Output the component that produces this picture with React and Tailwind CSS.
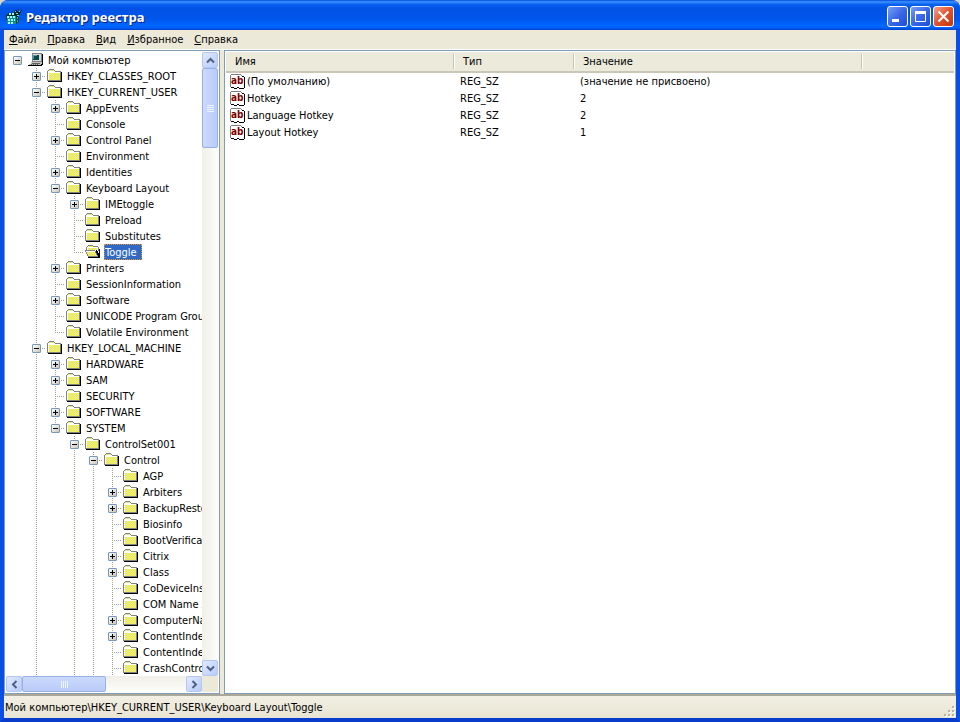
import { useState } from 'react';
import { clsx } from 'clsx';

const MENU = ['Файл', 'Правка', 'Вид', 'Избранное', 'Справка'];

// closed: has subkeys that are not loaded yet, more: has siblings that are not loaded yet
const TREE = {
  name: 'Мой компьютер',
  icon: 'computer',
  children: [
    { name: 'HKEY_CLASSES_ROOT', closed: true },
    {
      name: 'HKEY_CURRENT_USER',
      children: [
        { name: 'AppEvents', closed: true },
        { name: 'Console' },
        { name: 'Control Panel', closed: true },
        { name: 'Environment' },
        { name: 'Identities', closed: true },
        {
          name: 'Keyboard Layout',
          children: [
            { name: 'IMEtoggle', closed: true },
            { name: 'Preload' },
            { name: 'Substitutes' },
            { name: 'Toggle' },
          ],
        },
        { name: 'Printers', closed: true },
        { name: 'SessionInformation' },
        { name: 'Software', closed: true },
        { name: 'UNICODE Program Groups' },
        { name: 'Volatile Environment' },
      ],
    },
    {
      name: 'HKEY_LOCAL_MACHINE',
      more: true,
      children: [
        { name: 'HARDWARE', closed: true },
        { name: 'SAM', closed: true },
        { name: 'SECURITY' },
        { name: 'SOFTWARE', closed: true },
        {
          name: 'SYSTEM',
          children: [
            {
              name: 'ControlSet001',
              more: true,
              children: [
                {
                  name: 'Control',
                  more: true,
                  children: [
                    { name: 'AGP' },
                    { name: 'Arbiters', closed: true },
                    { name: 'BackupRestore', closed: true },
                    { name: 'Biosinfo' },
                    { name: 'BootVerificationProgram' },
                    { name: 'Citrix', closed: true },
                    { name: 'Class', closed: true },
                    { name: 'CoDeviceInstallers' },
                    { name: 'COM Name Arbiter' },
                    { name: 'ComputerName', closed: true },
                    { name: 'ContentIndex', closed: true },
                    { name: 'ContentIndexCommon' },
                    { name: 'CrashControl', more: true },
                  ],
                },
              ],
            },
          ],
        },
      ],
    },
  ],
};

const VALUES = [
  { name: '(По умолчанию)', type: 'REG_SZ', value: '(значение не присвоено)' },
  { name: 'Hotkey', type: 'REG_SZ', value: '2' },
  { name: 'Language Hotkey', type: 'REG_SZ', value: '2' },
  { name: 'Layout Hotkey', type: 'REG_SZ', value: '1' },
];

// flatten the tree; guides[i] says whether the ancestor at level i has siblings below
function flatten(node, closed, depth = 0, guides = [], last = true, path = '') {
  const id = path ? `${path}\\${node.name}` : node.name;
  const expandable = Boolean(node.closed || node.children);
  const open = Boolean(node.children) && !closed.includes(id);
  const row = { id, name: node.name, icon: node.icon, depth, guides, last, expandable, open };
  if (!open) return [row];
  const next = depth === 0 ? [false] : [...guides, !last];
  return [
    row,
    ...node.children.flatMap((child, i) =>
      flatten(child, closed, depth + 1, next, i === node.children.length - 1 && !child.more, id)
    ),
  ];
}

function RegeditIcon() {
  return (
    <svg width="16" height="16" viewBox="0 0 16 16" shapeRendering="crispEdges" aria-hidden="true">
      <path d="M0 6l3-2h5l3 2v9H1z" fill="#003838" />
      <path d="M1 7h9v8H1z" fill="#109090" />
      <path d="M3 4h2v2H3zM6 4h3v2H6zM1 7h2v2H1zM4 7h2v2H4zM7 7h2v2H7zM2 10h2v2H2zM5 10h2v2H5zM8 10h1v2H8zM2 13h2v2H2zM5 13h2v2H5z" fill="#a8f4f0" />
      <path d="M10 8h3v5l-3 2z" fill="#004848" />
      <path d="M11 8h1v2h-1zM11 11h1v2h-1z" fill="#30b0b0" />
      <path d="M8 2l2-1 2 2 2-2 1 2-2 4-3 1-2-2z" fill="#002828" />
      <path d="M9 2h1v1H9zM13 2h1v1h-1zM10 4h2v1h-2zM11 6h2v1h-2z" fill="#70e0e0" />
      <path d="M12 0h1v1h-1zM15 1h1v1h-1z" fill="#002828" />
    </svg>
  );
}

function ComputerIcon() {
  return (
    <svg className="ml-px shrink-0" width="16" height="16" viewBox="0 0 16 16" shapeRendering="crispEdges" aria-hidden="true">
      <path d="M4 1h10v9H4z" fill="#808080" />
      <path d="M5 2h8v7H5z" fill="#d8d8d8" />
      <path d="M5 3h6v5H5z" fill="#004c50" />
      <path d="M5 3h4v1H5zM5 4h1v3H5z" fill="#50a0a0" />
      <path d="M14 2h1v8h-1zM4 10h10v1H4z" fill="#000" />
      <path d="M3 10h11v2H3zM1 12h13v1H1z" fill="#c0c0c0" />
      <path d="M4 11h8v1H4zM3 12h1v1H3zM5 12h1v1H5zM7 12h1v1H7zM9 12h1v1H9z" fill="#606060" />
      <path d="M0 13h14v1H0zM14 10h1v3h-1zM13 12h1v1h-1z" fill="#000" />
    </svg>
  );
}

function FolderIcon() {
  return (
    <svg className="ml-px shrink-0" width="16" height="16" viewBox="0 0 16 16" shapeRendering="crispEdges" aria-hidden="true">
      <path d="M1 4h13v8H1z" fill="url(#dither)" />
      <path d="M2 2h5v2H2z" fill="url(#dither)" />
      <path d="M2 1h5v1H2zM1 2h1v1H1zM7 2h1v1H7zM0 3h1v9H0zM8 3h6v1H8z" fill="#808080" />
      <path d="M1 4h13v1H1zM1 5h1v7H1zM2 3h5v1H2z" fill="#fff" />
      <path d="M13 4h1v8h-1zM0 12h14v1H0z" fill="#808080" />
      <path d="M14 4h1v10h-1zM1 13h14v1H1z" fill="#000" />
    </svg>
  );
}

function OpenFolderIcon() {
  return (
    <svg className="ml-px shrink-0" width="16" height="16" viewBox="0 0 16 16" shapeRendering="crispEdges" aria-hidden="true">
      <path d="M2 3h11v4H2z" fill="#fff" />
      <path d="M3 2h5v1H3zM3 4h9v2H3z" fill="url(#dither)" />
      <path d="M3 1h5v1H3zM2 2h1v1H2zM8 2h5v1H8zM1 3h1v3H1zM13 3h1v4h-1z" fill="#808080" />
      <path d="M0 6h10v1h1v2h1v2h1v2H3v-2H2V9H1V7H0z" fill="url(#dither)" />
      <path d="M1 7h9v1H1z" fill="#fff" />
      <path d="M0 6h10v1H0zM0 7h1v1H0zM1 8h1v2H1zM2 10h1v2H2zM10 7h1v2h-1zM11 9h1v2h-1zM12 11h1v1h-1zM3 12h10v1H3z" fill="#808080" />
      <path d="M11 6h1v1h1v2h1v4h-1v-2h-1V9h-1zM14 5h1v9h-1zM3 13h12v1H3z" fill="#000" />
    </svg>
  );
}

function StringIcon() {
  return (
    <svg className="mr-px shrink-0" width="16" height="16" viewBox="0 0 16 16" shapeRendering="crispEdges" aria-hidden="true">
      <path d="M1 0h9l4 3v11H9l-1 1H4l-1-1H0V1z" fill="#fff" />
      <path d="M1 0h10v1H1zM0 1h1v12H0zM11 1h1v1h-1z" fill="#808080" />
      <path d="M12 2h2v1h-2zM14 3h1v11h-1zM11 14h3v1h-3zM1 13h3v1H1zM4 14h3v1H4zM7 13h2v1H7zM9 14h2v1H9z" fill="#000" />
      <text x="1" y="10" fontFamily="DejaVu Sans Condensed, sans-serif" fontWeight="bold" fontSize="10" fill="#800000">ab</text>
    </svg>
  );
}

function Chevron({ className }) {
  return (
    <svg className={className} width="9" height="9" viewBox="0 0 9 9" fill="none" stroke="#4d6185" strokeWidth="2" aria-hidden="true">
      <path d="M1 6.5L4.5 3 8 6.5" />
    </svg>
  );
}

function ScrollButton({ label, turn }) {
  return (
    <button
      aria-label={label}
      className="flex size-4 shrink-0 items-center justify-center rounded-xs border border-[#b4c6f2] bg-linear-to-br from-[#e1eafe] to-[#b9cbf8]"
    >
      <Chevron className={turn} />
    </button>
  );
}

function TreeLines({ row }) {
  const line = { stroke: '#a39f8c', strokeDasharray: '1 1' };
  return (
    <>
      {row.guides.map((on, i) => (
        <svg key={i} className="shrink-0" width="19" height="16" shapeRendering="crispEdges" aria-hidden="true">
          {on && <path d="M9.5 0V16" {...line} />}
        </svg>
      ))}
      <span className="h-4 w-[19px] shrink-0">
        {row.depth > 0 && (
          <svg width="19" height="16" shapeRendering="crispEdges" aria-hidden="true">
            <path d={row.last ? 'M9.5 0V8' : 'M9.5 0V16'} {...line} />
            <path d="M9 8.5H19" {...line} />
          </svg>
        )}
      </span>
    </>
  );
}

function TreeRow({ row, selected, onSelect, onToggle }) {
  return (
    <li className="flex h-4 items-center" role="treeitem" aria-selected={selected}>
      <TreeLines row={row} />
      {row.expandable && (
        <span className="relative size-0">
          <button
            onClick={onToggle}
            aria-label={`${row.open ? 'Свернуть' : 'Развернуть'} ${row.name}`}
            className="absolute -top-1 -left-[14px] size-[9px] rounded-[1px] border border-[#7898b5] bg-linear-to-br from-white to-[#cbc5b8]"
          >
            <svg className="block" width="7" height="7" shapeRendering="crispEdges" aria-hidden="true">
              <path d={row.open ? 'M1 3h5v1H1z' : 'M1 3h5v1H1zM3 1h1v5H3z'} fill="#000" />
            </svg>
          </button>
        </span>
      )}
      {row.icon === 'computer' ? <ComputerIcon /> : selected ? <OpenFolderIcon /> : <FolderIcon />}
      <button
        onClick={onSelect}
        className={clsx(
          'ml-[3px] h-4 pt-[2px] pr-[5px] pl-px leading-[14px] whitespace-nowrap',
          selected && 'bg-[#316ac5] text-white outline-1 -outline-offset-1 outline-dotted outline-[#e09040]'
        )}
      >
        {row.name}
      </button>
    </li>
  );
}

function Tree({ selected, onSelect }) {
  const [closed, setClosed] = useState([]);
  const rows = flatten(TREE, closed);

  const toggle = (id) =>
    setClosed(closed.includes(id) ? closed.filter(item => item !== id) : [...closed, id]);

  return (
    <section className="flex w-[216px] shrink-0 flex-col border border-[#7f9db9] bg-white p-px">
      <div className="flex min-h-0 flex-1">
        <ul role="tree" className="min-w-0 flex-1 overflow-hidden pl-[2px]">
          {rows.map(row => (
            <TreeRow
              key={row.id}
              row={row}
              selected={row.id === selected}
              onSelect={() => onSelect(row.id)}
              onToggle={() => toggle(row.id)}
            />
          ))}
        </ul>
        <div className="flex w-4 shrink-0 flex-col bg-linear-to-r from-[#f0efe8] to-[#fdfdfa]">
          <ScrollButton label="Вверх" turn="" />
          <div className="flex h-20 flex-col items-center justify-center gap-px rounded-xs border border-[#98b0e8] bg-linear-to-r from-[#cbd9fc] to-[#b9cbf8]">
            {[0, 1, 2, 3].map(i => (
              <span key={i} className="h-px w-[7px] bg-[#eef4fe]" />
            ))}
          </div>
          <div className="flex-1" />
          <ScrollButton label="Вниз" turn="rotate-180" />
        </div>
      </div>
      <div className="flex h-4 shrink-0 bg-[#ece9d8]">
        <div className="flex flex-1 bg-linear-to-b from-[#f0efe8] to-[#fdfdfa]">
          <ScrollButton label="Влево" turn="-rotate-90" />
          <div className="flex w-[84px] items-center justify-center gap-px rounded-xs border border-[#98b0e8] bg-linear-to-b from-[#cbd9fc] to-[#b9cbf8]">
            {[0, 1, 2, 3].map(i => (
              <span key={i} className="h-[7px] w-px bg-[#eef4fe]" />
            ))}
          </div>
          <div className="flex-1" />
          <ScrollButton label="Вправо" turn="rotate-90" />
        </div>
        <div className="w-4" />
      </div>
    </section>
  );
}

function HeaderCell({ children }) {
  return (
    <th className="h-5 border-b-2 border-[#cbc7b8] p-0 text-left font-normal">
      <span className="flex h-[15px] items-center border-r border-[#c7c5b2] pl-[9px] shadow-[1px_0_0_#fff]">{children}</span>
    </th>
  );
}

function ValueTable() {
  return (
    <section className="min-w-0 flex-1 overflow-hidden border border-[#7f9db9] bg-white p-px">
      <table className="w-full table-fixed border-collapse">
        <colgroup>
          <col className="w-[228px]" />
          <col className="w-[120px]" />
          <col className="w-[288px]" />
          <col />
        </colgroup>
        <thead className="bg-[#ebeadb]">
          <tr>
            <HeaderCell>Имя</HeaderCell>
            <HeaderCell>Тип</HeaderCell>
            <HeaderCell>Значение</HeaderCell>
            <td className="border-b-2 border-[#cbc7b8]" />
          </tr>
        </thead>
        <tbody>
          {VALUES.map(item => (
            <tr key={item.name} className="h-[17px]">
              <td className="p-0">
                <span className="flex h-[17px] items-center pl-1">
                  <StringIcon />
                  {item.name}
                </span>
              </td>
              <td className="p-0 pl-1.5">{item.type}</td>
              <td className="p-0 pl-1.5">{item.value}</td>
              <td />
            </tr>
          ))}
        </tbody>
      </table>
    </section>
  );
}

function TitleButton({ label, close, children }) {
  return (
    <button
      aria-label={label}
      className={clsx(
        'flex size-[21px] items-center justify-center rounded-[3px] border border-white bg-linear-to-br',
        close ? 'from-[#f0a088] via-[#e0512c] to-[#c03810]' : 'from-[#7a9cf4] via-[#3a68e6] to-[#1c4cd8]'
      )}
    >
      <svg width="19" height="19" viewBox="0 0 19 19" fill="none" stroke="#fff" aria-hidden="true">
        {children}
      </svg>
    </button>
  );
}

function TitleBar() {
  return (
    <header className="flex h-[30px] shrink-0 items-center gap-1 rounded-t-lg bg-[linear-gradient(to_bottom,#0048d8_0%,#3c94ff_6%,#0a62f0_14%,#0053e4_28%,#0055ea_60%,#0066ff_85%,#0062fa_92%,#0040c8_100%)] pt-[3px] pr-[6px] pl-[6px]">
      <RegeditIcon />
      <h1 className="flex-1 font-['Noto_Sans',sans-serif] text-[13px] font-bold text-white [text-shadow:1px_1px_0_#0a1f78]">
        Редактор реестра
      </h1>
      <div className="flex gap-0.5">
        <TitleButton label="Свернуть">
          <path d="M4 13.5h7" strokeWidth="3" />
        </TitleButton>
        <TitleButton label="Развернуть">
          <path d="M4.5 5v9.5h10V5" />
          <path d="M4 5.5h11" strokeWidth="3" />
        </TitleButton>
        <TitleButton label="Закрыть" close>
          <path d="M4.5 4.5l10 10M14.5 4.5l-10 10" strokeWidth="2" />
        </TitleButton>
      </div>
    </header>
  );
}

export default function App() {
  const [selected, setSelected] = useState('Мой компьютер\\HKEY_CURRENT_USER\\Keyboard Layout\\Toggle');

  return (
    <div className="h-screen bg-[#d8d4cc] font-['DejaVu_Sans_Condensed','DejaVu_Sans',sans-serif] text-[11px] leading-4 text-black">
      <svg className="absolute size-0" aria-hidden="true">
        <pattern id="dither" width="2" height="2" patternUnits="userSpaceOnUse">
          <path d="M0 0h2v2H0z" fill="#d8d8d8" />
          <path d="M1 0h1v1H1zM0 1h1v1H0z" fill="#ff0" />
        </pattern>
      </svg>
      <div className="flex h-full flex-col overflow-hidden rounded-t-lg bg-[#0a50e0]">
        <TitleBar />
        <div className="flex min-h-0 flex-1 flex-col border-x-4 border-b-4 border-[#0a4fe4] border-b-[#0a3ccc] bg-[#ece9d8]">
          <nav className="flex h-5 shrink-0 items-center gap-px border-b border-white">
            {MENU.map(item => (
              <button key={item} className="h-[18px] px-[5px]">
                <span className="underline">{item[0]}</span>
                {item.slice(1)}
              </button>
            ))}
          </nav>
          <main className="flex min-h-0 flex-1 gap-1">
            <Tree selected={selected} onSelect={setSelected} />
            <ValueTable />
          </main>
          <footer className="flex h-6 shrink-0 items-center justify-between border-t-2 border-[#aca899] bg-linear-to-b from-[#f2f0e4] to-[#e8e5d4] pt-0.5 pl-px">
            <span className="truncate">{selected}</span>
            <svg className="shrink-0 self-end" width="13" height="13" viewBox="0 0 13 13" shapeRendering="crispEdges" aria-hidden="true">
              <path d="M10 2h2v2h-2zM6 6h2v2H6zM10 6h2v2h-2zM2 10h2v2H2zM6 10h2v2H6zM10 10h2v2h-2z" fill="#fff" />
              <path d="M9 1h2v2H9zM5 5h2v2H5zM9 5h2v2H9zM1 9h2v2H1zM5 9h2v2H5zM9 9h2v2H9z" fill="#b8b4a2" />
            </svg>
          </footer>
        </div>
      </div>
    </div>
  );
}
